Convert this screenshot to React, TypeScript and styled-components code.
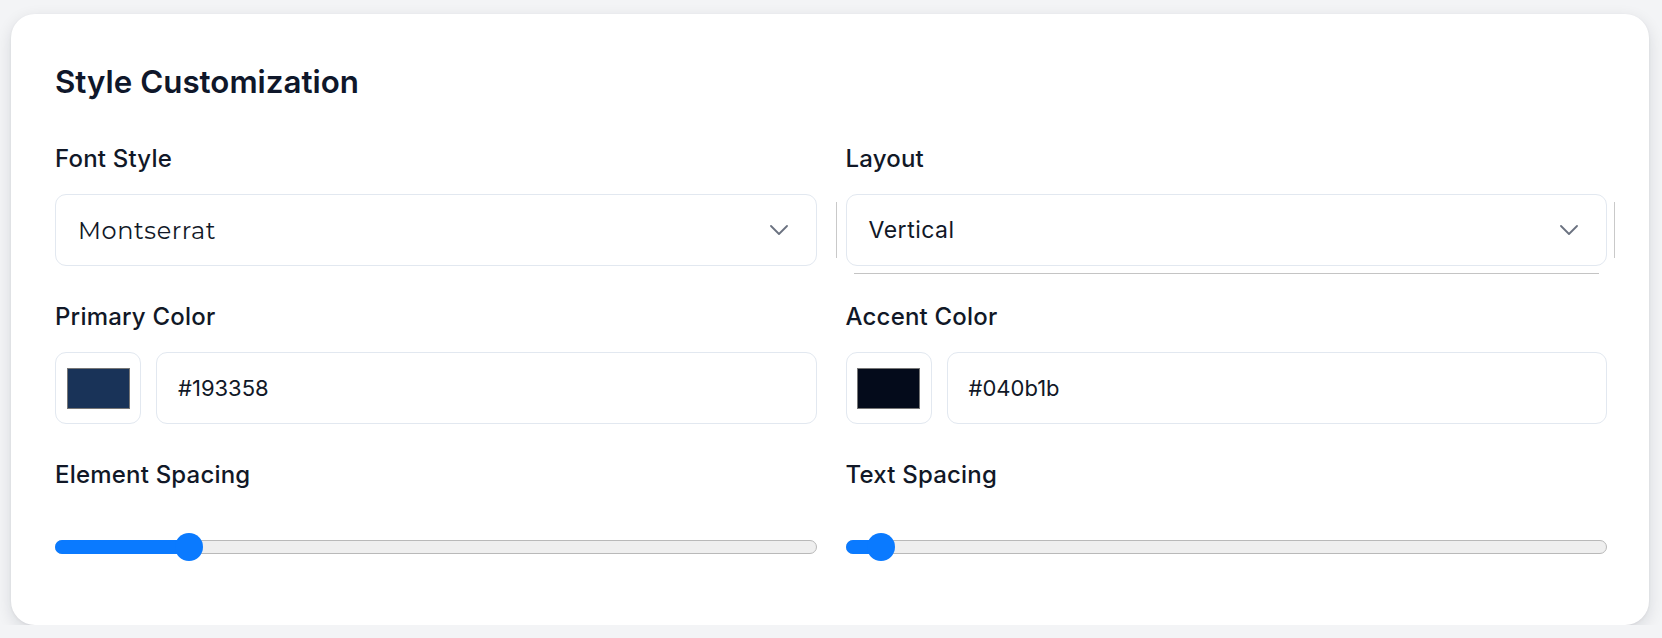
import React from "react";
import styled, { createGlobalStyle } from "styled-components";

const GlobalStyle = createGlobalStyle`
  * { box-sizing: border-box; }
  body {
    margin: 0;
    background: #f3f4f6;
    font-family: Inter, "Liberation Sans", sans-serif;
    color: #111827;
  }
`;

type SliderField = { label: string; value: number; min: number; max: number };

const sliders: SliderField[] = [
  { label: "Element Spacing", value: 16.4, min: 0, max: 100 },
  { label: "Text Spacing", value: 3, min: 0, max: 100 },
];

const colors = [
  { label: "Primary Color", value: "#193358" },
  { label: "Accent Color", value: "#040b1b" },
];

const Chevron = () => (
  <svg width="18" height="10" viewBox="0 0 18 10" fill="none">
    <polyline
      points="1,1 9,9 17,1"
      stroke="#6b7280"
      strokeWidth="1.8"
      strokeLinecap="round"
      strokeLinejoin="round"
    />
  </svg>
);

export default function App() {
  return (
    <>
      <GlobalStyle />
      <Card>
        <Title>Style Customization</Title>
        <Grid>
          <Field>
            <Label>Font Style</Label>
            <SelectWrap $tick={20}>
              <Select>
                <SelectText $font="Montserrat">Montserrat</SelectText>
                <Chevron />
              </Select>
            </SelectWrap>
          </Field>
          <Field>
            <Label>Layout</Label>
            <SelectWrap $tick={8} $underline>
              <Select>
                <SelectText>Vertical</SelectText>
                <Chevron />
              </Select>
            </SelectWrap>
          </Field>

          {colors.map((c) => (
            <Field key={c.label}>
              <Label>{c.label}</Label>
              <ColorRow>
                <SwatchBox>
                  <Swatch $color={c.value} />
                </SwatchBox>
                <HexInput>{c.value}</HexInput>
              </ColorRow>
            </Field>
          ))}

          {sliders.map((s) => {
            const p = (s.value - s.min) / (s.max - s.min);
            return (
              <Field key={s.label}>
                <Label>{s.label}</Label>
                <SliderBox>
                  <Track>
                    <Fill style={{ width: `calc(14px + ${p} * (100% - 28px))` }} />
                    <Thumb style={{ left: `calc(${p} * (100% - 28px))` }} />
                  </Track>
                </SliderBox>
              </Field>
            );
          })}
        </Grid>
      </Card>
    </>
  );
}

const Card = styled.section`
  margin: 14px 13px 0 11px;
  padding: 44px 42px 43px 44px;
  background: #ffffff;
  border-radius: 24px;
  box-shadow: 0 5px 16px rgba(15, 23, 42, 0.12), 0 1px 3px rgba(15, 23, 42, 0.06);
`;

const Title = styled.h2`
  margin: 0;
  font-size: 31.3px;
  line-height: 48px;
  font-weight: 600;
  color: #0f172a;
`;

const Grid = styled.div`
  margin-top: 36px;
  display: grid;
  grid-template-columns: 1fr 1fr;
  column-gap: 29px;
  row-gap: 34px;
`;

const Field = styled.div`
  display: flex;
  flex-direction: column;
`;

const Label = styled.label`
  font-size: 24px;
  line-height: 33px;
  font-weight: 500;
  letter-spacing: 0.2px;
  color: #111827;
  margin-bottom: 19px;
`;

interface SelectWrapProps {
  $tick: number;
  $underline?: boolean;
}

const SelectWrap = styled.div<SelectWrapProps>`
  position: relative;
  &::after {
    content: "";
    position: absolute;
    top: 8px;
    bottom: 8px;
    right: -${({ $tick }) => $tick}px;
    width: 1px;
    background: #c9c9c9;
  }
  &::before {
    content: "";
    display: ${({ $underline }) => ($underline ? "block" : "none")};
    position: absolute;
    left: 8px;
    right: 8px;
    bottom: -8px;
    height: 1px;
    background: #c4c4c4;
  }
`;

const Select = styled.div`
  height: 72px;
  display: flex;
  align-items: center;
  justify-content: space-between;
  padding: 0 28px 0 22px;
  background: #ffffff;
  border: 1px solid #e2e8f0;
  border-radius: 11px;
`;

const SelectText = styled.span<{ $font?: string }>`
  font-family: ${({ $font }) =>
    $font ? `"${$font}", "Open Sans", sans-serif` : `Inter, sans-serif`};
  font-size: ${({ $font }) => ($font ? "24px" : "23px")};
  letter-spacing: ${({ $font }) => ($font ? "0.6px" : "0.5px")};
  color: #111827;
`;

const ColorRow = styled.div`
  display: flex;
  gap: 15px;
  height: 72px;
`;

const SwatchBox = styled.div`
  width: 86px;
  flex: none;
  display: flex;
  align-items: center;
  justify-content: center;
  border: 1px solid #e2e8f0;
  border-radius: 11px;
  background: #ffffff;
`;

const Swatch = styled.div<{ $color: string }>`
  width: 63px;
  height: 41px;
  background: ${({ $color }) => $color};
  border: 1px solid #767676;
`;

const HexInput = styled.div`
  flex: 1;
  display: flex;
  align-items: center;
  padding-left: 21px;
  border: 1px solid #e2e8f0;
  border-radius: 11px;
  font-size: 22px;
  color: #111827;
`;

const SliderBox = styled.div`
  height: 72px;
  display: flex;
  align-items: center;
  padding-top: 2px;
`;

const Track = styled.div`
  position: relative;
  width: 100%;
  height: 14px;
  border-radius: 7px;
  background: #efefef;
  border: 1px solid #b9b9b9;
`;

const Fill = styled.div`
  position: absolute;
  left: -1px;
  top: -1px;
  bottom: -1px;
  background: #0a7aff;
  border-radius: 7px;
`;

const Thumb = styled.div`
  position: absolute;
  top: 50%;
  width: 28px;
  height: 28px;
  margin-left: -1px;
  transform: translateY(-50%);
  border-radius: 50%;
  background: #0a7aff;
`;
